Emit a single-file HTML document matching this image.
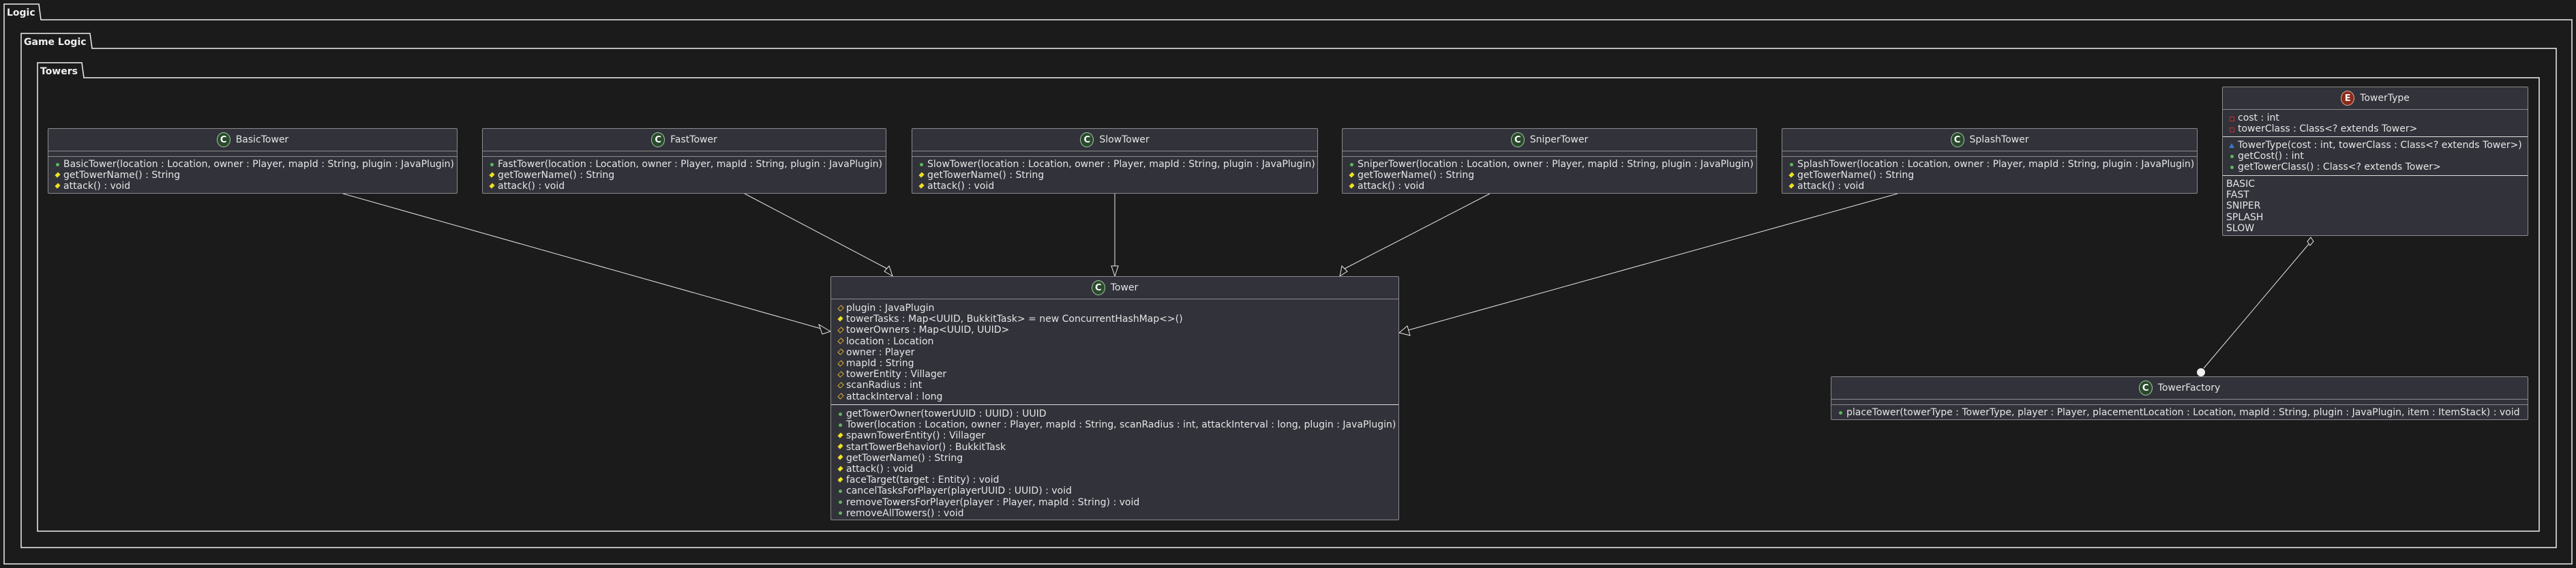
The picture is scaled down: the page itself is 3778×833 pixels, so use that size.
<!DOCTYPE html>
<html><head><meta charset="utf-8"><style>
html,body{margin:0;padding:0;background:#1b1b1c;}
body{width:3778px;height:833px;position:relative;overflow:hidden;font-family:"DejaVu Sans","Liberation Sans",sans-serif;color:#e6e6e6;}
svg.ov{position:absolute;left:0;top:0;}
.box{position:absolute;background:#31323a;border:1px solid #8c8c8c;box-sizing:border-box;border-radius:2px;font-size:14px;}
.hd{height:32px;display:flex;align-items:center;justify-content:center;font-size:14px;}
.ci{width:20px;height:22px;border-radius:50%;background:#2a4a2c;border:1px solid #a8c8a8;box-sizing:border-box;color:#fff;font-weight:bold;font-size:13px;display:flex;align-items:center;justify-content:center;margin-right:8px;}
.ei{background:#8a2a18;border-color:#d8b0a0;}
.sec{border-top:1px solid #8c8c8c;box-sizing:border-box;}
.sec.w{border-top:1px solid #e0e0e0;}
.ln{height:16.2px;line-height:16.2px;white-space:nowrap;display:flex;align-items:center;}
.ic{width:9px;height:9px;margin-right:4px;flex:none;position:relative;}
.pub::after{content:"";position:absolute;left:2px;top:2px;width:5px;height:5px;border-radius:50%;background:#5cb85c;}
.prf::after{content:"";position:absolute;left:2px;top:1px;width:4px;height:4px;border:1px solid #c8a030;transform:rotate(45deg) scaleY(1.3);}
.prm::after{content:"";position:absolute;left:2px;top:1px;width:5px;height:5px;background:#f0e020;transform:rotate(45deg) scaleY(1.3);}
.pri::after{content:"";position:absolute;left:1px;top:2px;width:5px;height:5px;border:1px solid #c03030;}
.pkg::after{content:"";position:absolute;left:0px;top:1px;width:0;height:0;border-left:4px solid transparent;border-right:4px solid transparent;border-bottom:7px solid #3a78c0;}
</style></head><body>
<svg class="ov" width="3778" height="833" viewBox="0 0 3778 833">
<g fill="none" stroke="#f0f0f0" stroke-width="1.5">
<path d="M6 29 L6 6 L57 6 L60 29 L3772 29 L3772 827 L6 827 Z"/>
<path d="M31 71 L31 49 L132 49 L135 71 L3749 71 L3749 803 L31 803 Z"/>
<path d="M55 114 L55 92 L120 92 L123 114 L3724 114 L3724 779 L55 779 Z"/>
</g>
<g fill="#f0f0f0" font-weight="bold" font-size="14" font-family="DejaVu Sans, sans-serif">
<text x="10" y="23">Logic</text>
<text x="35" y="66">Game Logic</text>
<text x="59" y="109">Towers</text>
</g>
<g fill="none" stroke="#e8e8e8" stroke-width="1">
<line x1="503" y1="284" x2="1204" y2="482"/>
<line x1="1092" y1="284" x2="1301" y2="394"/>
<line x1="1635" y1="284" x2="1635" y2="390"/>
<line x1="2185" y1="284" x2="1972" y2="394"/>
<line x1="2783" y1="284" x2="2066" y2="484"/>
<line x1="3386" y1="358" x2="3232" y2="540"/>
</g>
<g fill="#1b1b1c" stroke="#e8e8e8" stroke-width="1">
<polygon points="1218,486 1201,476 1206,490"/>
<polygon points="1309,405 1297,398 1304,390"/>
<polygon points="1635,405 1630,390 1640,390"/>
<polygon points="1965,405 1968,390 1976,398"/>
<polygon points="2052,488 2064,478 2068,492"/>
<polygon points="3389,348 3393,354 3388,360 3384,354"/>
</g>
<circle cx="3228" cy="546" r="6" fill="#f0f0f0"/>
</svg>

<div class="box" style="left:70px;top:188px;width:601px;height:96px;">
<div class="hd"><span class="ci">C</span>BasicTower</div>
<div class="sec" style="height:8px"></div>
<div class="sec" style="padding:3px 0 0 9px">
<div class="ln"><span class="ic pub"></span>BasicTower(location : Location, owner : Player, mapId : String, plugin : JavaPlugin)</div>
<div class="ln"><span class="ic prm"></span>getTowerName() : String</div>
<div class="ln"><span class="ic prm"></span>attack() : void</div></div></div>

<div class="box" style="left:707px;top:188px;width:593px;height:96px;">
<div class="hd"><span class="ci">C</span>FastTower</div>
<div class="sec" style="height:8px"></div>
<div class="sec" style="padding:3px 0 0 9px">
<div class="ln"><span class="ic pub"></span>FastTower(location : Location, owner : Player, mapId : String, plugin : JavaPlugin)</div>
<div class="ln"><span class="ic prm"></span>getTowerName() : String</div>
<div class="ln"><span class="ic prm"></span>attack() : void</div></div></div>

<div class="box" style="left:1337px;top:188px;width:596px;height:96px;">
<div class="hd"><span class="ci">C</span>SlowTower</div>
<div class="sec" style="height:8px"></div>
<div class="sec" style="padding:3px 0 0 9px">
<div class="ln"><span class="ic pub"></span>SlowTower(location : Location, owner : Player, mapId : String, plugin : JavaPlugin)</div>
<div class="ln"><span class="ic prm"></span>getTowerName() : String</div>
<div class="ln"><span class="ic prm"></span>attack() : void</div></div></div>

<div class="box" style="left:1968px;top:188px;width:609px;height:96px;">
<div class="hd"><span class="ci">C</span>SniperTower</div>
<div class="sec" style="height:8px"></div>
<div class="sec" style="padding:3px 0 0 9px">
<div class="ln"><span class="ic pub"></span>SniperTower(location : Location, owner : Player, mapId : String, plugin : JavaPlugin)</div>
<div class="ln"><span class="ic prm"></span>getTowerName() : String</div>
<div class="ln"><span class="ic prm"></span>attack() : void</div></div></div>

<div class="box" style="left:2613px;top:188px;width:610px;height:96px;">
<div class="hd"><span class="ci">C</span>SplashTower</div>
<div class="sec" style="height:8px"></div>
<div class="sec" style="padding:3px 0 0 9px">
<div class="ln"><span class="ic pub"></span>SplashTower(location : Location, owner : Player, mapId : String, plugin : JavaPlugin)</div>
<div class="ln"><span class="ic prm"></span>getTowerName() : String</div>
<div class="ln"><span class="ic prm"></span>attack() : void</div></div></div>

<div class="box" style="left:3259px;top:127px;width:449px;height:219px;">
<div class="hd"><span class="ci ei">E</span>TowerType</div>
<div class="sec" style="height:40px;padding:4px 0 0 9px">
<div class="ln"><span class="ic pri"></span>cost : int</div>
<div class="ln"><span class="ic pri"></span>towerClass : Class&lt;? extends Tower&gt;</div></div>
<div class="sec w" style="height:57px;padding:4px 0 0 9px">
<div class="ln"><span class="ic pkg"></span>TowerType(cost : int, towerClass : Class&lt;? extends Tower&gt;)</div>
<div class="ln"><span class="ic pub"></span>getCost() : int</div>
<div class="ln"><span class="ic pub"></span>getTowerClass() : Class&lt;? extends Tower&gt;</div></div>
<div class="sec w" style="padding:4px 0 0 5px">
<div class="ln">BASIC</div><div class="ln">FAST</div><div class="ln">SNIPER</div><div class="ln">SPLASH</div><div class="ln">SLOW</div></div></div>

<div class="box" style="left:1218px;top:405px;width:834px;height:358px;">
<div class="hd"><span class="ci">C</span>Tower</div>
<div class="sec" style="height:155px;padding:5px 0 0 9px">
<div class="ln"><span class="ic prf"></span>plugin : JavaPlugin</div>
<div class="ln"><span class="ic prm"></span>towerTasks : Map&lt;UUID, BukkitTask&gt; = new ConcurrentHashMap&lt;&gt;()</div>
<div class="ln"><span class="ic prf"></span>towerOwners : Map&lt;UUID, UUID&gt;</div>
<div class="ln"><span class="ic prf"></span>location : Location</div>
<div class="ln"><span class="ic prf"></span>owner : Player</div>
<div class="ln"><span class="ic prf"></span>mapId : String</div>
<div class="ln"><span class="ic prf"></span>towerEntity : Villager</div>
<div class="ln"><span class="ic prf"></span>scanRadius : int</div>
<div class="ln"><span class="ic prf"></span>attackInterval : long</div></div>
<div class="sec w" style="padding:5px 0 0 9px">
<div class="ln"><span class="ic pub"></span>getTowerOwner(towerUUID : UUID) : UUID</div>
<div class="ln"><span class="ic pub"></span>Tower(location : Location, owner : Player, mapId : String, scanRadius : int, attackInterval : long, plugin : JavaPlugin)</div>
<div class="ln"><span class="ic prm"></span>spawnTowerEntity() : Villager</div>
<div class="ln"><span class="ic prm"></span>startTowerBehavior() : BukkitTask</div>
<div class="ln"><span class="ic prm"></span>getTowerName() : String</div>
<div class="ln"><span class="ic prm"></span>attack() : void</div>
<div class="ln"><span class="ic prm"></span>faceTarget(target : Entity) : void</div>
<div class="ln"><span class="ic pub"></span>cancelTasksForPlayer(playerUUID : UUID) : void</div>
<div class="ln"><span class="ic pub"></span>removeTowersForPlayer(player : Player, mapId : String) : void</div>
<div class="ln"><span class="ic pub"></span>removeAllTowers() : void</div></div></div>

<div class="box" style="left:2685px;top:552px;width:1023px;height:64px;">
<div class="hd"><span class="ci">C</span>TowerFactory</div>
<div class="sec" style="height:8px"></div>
<div class="sec" style="padding:3px 0 0 9px">
<div class="ln"><span class="ic pub"></span>placeTower(towerType : TowerType, player : Player, placementLocation : Location, mapId : String, plugin : JavaPlugin, item : ItemStack) : void</div></div></div>
</body></html>
